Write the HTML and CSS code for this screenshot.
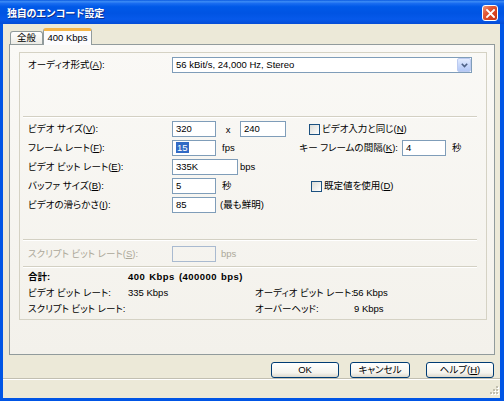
FILE: index.html
```html
<!DOCTYPE html>
<html lang="ja">
<head>
<meta charset="utf-8">
<title>独自のエンコード設定</title>
<link rel="stylesheet" href="styles.css">
</head>
<body>
<div class="window">
  <div class="titlebar">
    <span class="title">独自のエンコード設定</span>
    <span class="close"><svg width="9" height="9" viewBox="0 0 9 9"><path d="M1 1 L8 8 M8 1 L1 8" stroke="#fff" stroke-width="1.8" stroke-linecap="square"/></svg></span>
  </div>
  <div class="client">
    <div class="tabs">
      <div class="tab">全般</div>
      <div class="tab active">400 Kbps</div>
    </div>
    <div class="panel">
      <div class="group">
        <div class="row audio">
          <span class="lbl">オーディオ形式(<u>A</u>):</span>
          <div class="combo"><span class="combo-text">56 kBit/s, 24,000 Hz, Stereo</span><span class="combo-btn"><svg width="7" height="5" viewBox="0 0 7 5"><path d="M0.8 0.8 L3.5 3.6 L6.2 0.8" fill="none" stroke="#4D6185" stroke-width="1.6"/></svg></span></div>
        </div>
        <div class="sep sep1"></div>
        <div class="vrows">
          <div class="row">
            <span class="lbl">ビデオ サイズ(<u>V</u>):</span>
            <span class="tb w44">320</span><span class="times">x</span><span class="tb w46">240</span>
            <span class="chk ml23"><span class="box"></span>ビデオ入力と同じ(<u>N</u>)</span>
          </div>
          <div class="row">
            <span class="lbl">フレーム レート(<u>F</u>):</span>
            <span class="tb w44"><span class="sel">15</span></span><span class="unit fps">fps</span>
            <span class="kf">キー フレームの間隔(<u>K</u>):</span>
            <span class="tb w44 ml4">4</span><span class="unit">秒</span>
          </div>
          <div class="row">
            <span class="lbl">ビデオ ビット レート(<u>E</u>):</span>
            <span class="tb w66">335K</span><span class="unit ml2">bps</span>
          </div>
          <div class="row">
            <span class="lbl">バッファ サイズ(<u>B</u>):</span>
            <span class="tb w44">5</span><span class="unit sec">秒</span>
            <span class="chk"><span class="box"></span>既定値を使用(<u>D</u>)</span>
          </div>
          <div class="row">
            <span class="lbl">ビデオの滑らかさ(<u>I</u>):</span>
            <span class="tb w44">85</span><span class="unit ml4">(最も鮮明)</span>
          </div>
        </div>
        <div class="sep sep2"></div>
        <div class="row script disabled">
          <span class="lbl">スクリプト ビット レート(<u>S</u>):</span>
          <span class="tb w44 off"></span><span class="unit ml5">bps</span>
        </div>
        <div class="sep sep3"></div>
        <div class="summary">
          <span class="b">合計:</span><span class="b total span3">400 Kbps (400000 bps)</span>
          <span>ビデオ ビット レート:</span><span>335 Kbps</span><span>オーディオ ビット レート:</span><span>56 Kbps</span>
          <span>スクリプト ビット レート:</span><span></span><span>オーバーヘッド:</span><span class="pad1">9 Kbps</span>
        </div>
      </div>
    </div>
    <div class="buttons">
      <span class="btn ok">OK</span>
      <span class="btn cancel">キャンセル</span>
      <span class="btn help">ヘルプ(<u>H</u>)</span>
    </div>
    <div class="status">
      <svg class="grip" width="11" height="11" viewBox="0 0 11 11">
        <g fill="#fff"><rect x="9" y="1" width="2" height="2"/><rect x="6" y="4" width="2" height="2"/><rect x="9" y="4" width="2" height="2"/><rect x="3" y="7" width="2" height="2"/><rect x="6" y="7" width="2" height="2"/><rect x="9" y="7" width="2" height="2"/></g>
        <g fill="#C1BEAE"><rect x="8" y="0" width="2" height="2"/><rect x="5" y="3" width="2" height="2"/><rect x="8" y="3" width="2" height="2"/><rect x="2" y="6" width="2" height="2"/><rect x="5" y="6" width="2" height="2"/><rect x="8" y="6" width="2" height="2"/></g>
      </svg>
    </div>
  </div>
</div>
</body>
</html>
```
FILE: styles.css
```css
html, body {
  margin: 0;
  padding: 0;
  overflow: hidden;
}
.window {
  width: 504px;
  height: 401px;
  box-sizing: border-box;
  display: flex;
  flex-direction: column;
  background: #0055E5;
  font-family: "Liberation Sans", "Noto Sans CJK JP", sans-serif;
  font-size: 9.5px;
  font-feature-settings: "palt";
  color: #000;
}
u { text-decoration: underline; text-underline-offset: 1px; }

.titlebar {
  height: 24px;
  flex: none;
  display: flex;
  align-items: center;
  padding: 0 6px 0 7px;
  background: linear-gradient(to bottom, #0A5AE0 0%, #3C8CF6 7%, #1A6DF0 14%, #0059E8 28%, #0054E3 55%, #0659EA 80%, #044CD6 100%);
}
.title {
  flex: 1;
  color: #fff;
  font-weight: bold;
  font-size: 10px;
  font-feature-settings: normal;
  letter-spacing: -0.3px;
  text-shadow: 1px 1px 0 #0A2C8C;
}
.close {
  width: 16px;
  height: 16px;
  margin-top: 2px;
  box-sizing: border-box;
  border: 1px solid #fff;
  border-radius: 3px;
  background: linear-gradient(135deg, #EE9A7E 0%, #E25A38 35%, #D4401F 70%, #C2351A 100%);
  display: flex;
  align-items: center;
  justify-content: center;
}

.client {
  flex: 1;
  margin: 0 4px 3px 3px;
  background: #ECE9D8;
  display: flex;
  flex-direction: column;
}

.tabs {
  height: 20px;
  flex: none;
  display: flex;
  align-items: flex-end;
  padding-left: 7px;
}
.tab {
  height: 13px;
  box-sizing: border-box;
  padding: 0 6px;
  border: 1px solid #919B9C;
  border-bottom: none;
  border-radius: 3px 3px 0 0;
  background: linear-gradient(#FFFFFF, #ECEBE5);
  line-height: 12px;
  width: 33px;
  text-align: center;
}
.tab.active {
  width: 49px;
  height: 17px;
  margin-bottom: -1px;
  position: relative;
  z-index: 1;
  border-top: 3px solid #F5B548;
  background: #FCFCFE;
  line-height: 13px;
  padding: 0;
}

.panel {
  flex: none;
  height: 311px;
  width: 486px;
  margin-left: 6px;
  box-sizing: border-box;
  border: 1px solid #919B9C;
  background: linear-gradient(#FAF9F6, #F3F1EB);
  padding: 7px 0 0 9px;
}
.group {
  width: 468px;
  height: 268px;
  box-sizing: border-box;
  border: 1px solid #D5D2C4;
}

.row {
  display: flex;
  align-items: center;
  height: 16px;
  padding-left: 8px;
  white-space: nowrap;
}
.lbl {
  width: 144px;
  flex: none;
  line-height: 12px;
}
.audio { margin-top: 4px; }

.combo {
  width: 300px;
  height: 16px;
  box-sizing: border-box;
  border: 1px solid #7F9DB9;
  background: #fff;
  display: flex;
  align-items: center;
  padding: 0 0 0 3px;
}
.combo-text { flex: 1; line-height: 12px; }
.combo-btn {
  width: 14px;
  height: 14px;
  box-sizing: border-box;
  border: 1px solid #BCCBF0;
  border-radius: 2px;
  background: linear-gradient(#E3ECFE, #C3D4FA 60%, #B3C8F6);
  display: flex;
  align-items: center;
  justify-content: center;
}

.sep {
  height: 0;
  margin: 0 9px 0 3px;
  border-top: 1px solid #D3D0C3;
  border-bottom: 1px solid #FFFFFF;
}
.sep1 { margin-top: 43px; }
.sep2 { margin-top: 26px; }
.sep3 { margin-top: 4px; }

.vrows {
  padding-top: 3px;
  display: flex;
  flex-direction: column;
  gap: 3px;
}

.tb {
  height: 16px;
  box-sizing: border-box;
  flex: none;
  border: 1px solid #7F9DB9;
  background: #fff;
  padding-left: 3px;
  line-height: 14px;
}
.tb.off { background: transparent; border-color: #A9BAD0; }
.w44 { width: 44px; }
.w46 { width: 46px; }
.w66 { width: 66px; }
.ml4 { margin-left: 4px; }
.ml23 { margin-left: 23px; }

.sel {
  background: #316AC5;
  color: #fff;
  padding: 0 1px;
}
.times {
  width: 24px;
  text-align: center;
  flex: none;
}
.unit {
  margin-left: 6px;
  flex: none;
  line-height: 12px;
}
.unit.ml2 { margin-left: 2px; }
.unit.ml4 { margin-left: 4px; }
.unit.ml5 { margin-left: 5px; }
.fps { width: 20px; }
.sec { width: 89px; }
.kf {
  width: 156px;
  text-align: right;
  flex: none;
  line-height: 12px;
}

.chk {
  display: flex;
  align-items: center;
  line-height: 12px;
}
.box {
  width: 11px;
  height: 11px;
  box-sizing: border-box;
  border: 1px solid #1C5180;
  background: linear-gradient(135deg, #DCDCD6, #FFFFFF);
  margin-right: 2px;
}

.script { margin-top: 5px; }
.disabled { color: #ACA899; }

.summary {
  display: grid;
  grid-template-columns: 100px 127px 98px auto;
  padding: 1px 0 0 8px;
  line-height: 16px;
  white-space: nowrap;
}
.b { font-weight: bold; }
.total { letter-spacing: 0.45px; word-spacing: 1px; }
.span3 { grid-column: span 3; }
.pad1 { padding-left: 1px; }

.buttons {
  flex: none;
  display: flex;
  justify-content: flex-end;
  margin-top: 7px;
  padding-right: 6px;
  height: 16px;
}
.btn {
  height: 16px;
  box-sizing: border-box;
  border: 1px solid #003C74;
  border-radius: 3px;
  background: linear-gradient(#FFFFFF, #F5F4EE 70%, #DCD8CC);
  text-align: center;
  line-height: 14px;
}
.ok { width: 68px; }
.cancel { width: 60px; margin-left: 11px; }
.help { width: 68px; margin-left: 16px; }

.status {
  flex: 1;
  border-top: 1px solid #C2BFB1;
  box-shadow: inset 0 1px 0 #FFFFFF;
  display: flex;
  justify-content: flex-end;
  align-items: flex-end;
  padding: 0 1px 1px 0;
}
.grip { display: block; }
```
